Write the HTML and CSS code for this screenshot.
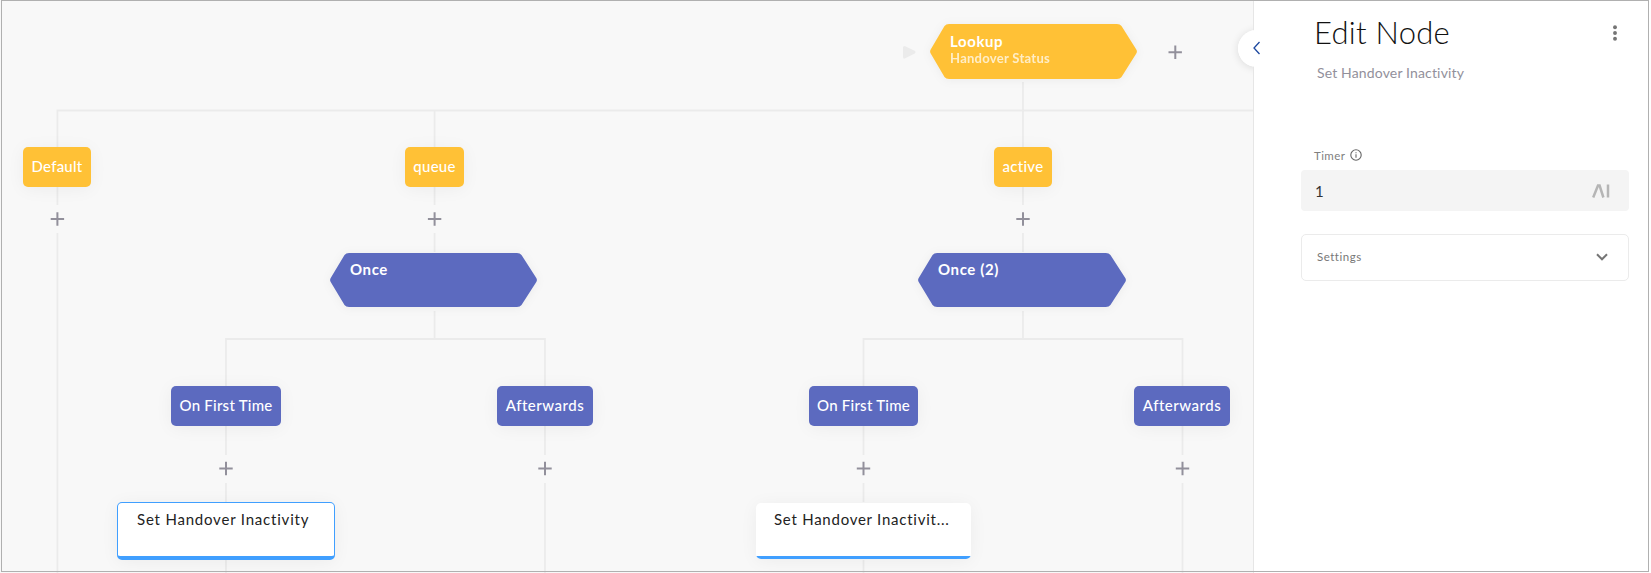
FILE: index.html
```html
<!DOCTYPE html>
<html lang="en">
<head>
<meta charset="utf-8">
<title>Edit Node</title>
<link rel="stylesheet" href="styles.css">
</head>
<body>
<div class="app">
  <main class="canvas">
    <svg class="edges" width="1254" height="573" viewBox="0 0 1254 573">
      <path d="M57.4 147V110.5H1254M434.6 110.5V205M1023 82V205M57.4 147V205M57.4 233V573M434.6 233V252M1023 233V252"/>
      <path d="M434.6 311V339M226 455V339H545V455M226 483V502M545 483V573M226 560V573"/>
      <path d="M1023 311V339M863.5 455V339H1182.5V455M863.5 483V502M1182.5 483V573M863.5 560V573"/>
      <path class="play" d="M904.5 47.5L914 52.2L904.5 57Z"/>
      <g class="plus">
        <path d="M1168.5 52.3h13.4M1175.3 45.6v13.4"/>
        <path d="M50.7 219h13.4M57.4 212.3v13.4"/>
        <path d="M427.9 219h13.4M434.6 212.3v13.4"/>
        <path d="M1016.3 219h13.4M1023 212.3v13.4"/>
        <path d="M219.3 468.5h13.4M226 461.8v13.4"/>
        <path d="M538.3 468.5h13.4M545 461.8v13.4"/>
        <path d="M856.8 468.5h13.4M863.5 461.8v13.4"/>
        <path d="M1175.8 468.5h13.4M1182.5 461.8v13.4"/>
      </g>
    </svg>

    <div class="hex lookup">
      <svg class="shape" width="207" height="55" viewBox="0 0 207 55"><path d="M19 0H187Q190 0 191.500 2L206.300 25.500Q207.500 27.500 206.300 29.500L191.500 53Q190 55 187 55H19Q16 55 14.500 53L.7 29.500Q-.5 27.500 .7 25.500L14.500 2Q16 0 19 0Z"/></svg>
      <div class="label"><b>Lookup</b><span>Handover Status</span></div>
    </div>
    <div class="hex once-a">
      <svg class="shape" width="207" height="54" viewBox="0 0 207 55" preserveAspectRatio="none"><path d="M19 0H187Q190 0 191.500 2L206.300 25.500Q207.500 27.500 206.300 29.500L191.500 53Q190 55 187 55H19Q16 55 14.500 53L.7 29.500Q-.5 27.500 .7 25.500L14.500 2Q16 0 19 0Z"/></svg>
      <div class="label"><b>Once</b></div>
    </div>
    <div class="hex once-b">
      <svg class="shape" width="208" height="54" viewBox="0 0 207 55" preserveAspectRatio="none"><path d="M19 0H187Q190 0 191.500 2L206.300 25.500Q207.500 27.500 206.300 29.500L191.500 53Q190 55 187 55H19Q16 55 14.500 53L.7 29.500Q-.5 27.500 .7 25.500L14.500 2Q16 0 19 0Z"/></svg>
      <div class="label"><b>Once (2)</b></div>
    </div>

    <div class="tag yellow default"><span>Default</span></div>
    <div class="tag yellow queue"><span>queue</span></div>
    <div class="tag yellow active"><span>active</span></div>
    <div class="tag blue first-a"><span>On First Time</span></div>
    <div class="tag blue after-a"><span>Afterwards</span></div>
    <div class="tag blue first-b"><span>On First Time</span></div>
    <div class="tag blue after-b"><span>Afterwards</span></div>

    <div class="card selected"><span>Set Handover Inactivity</span></div>
    <div class="card plain"><span>Set Handover Inactivit...</span></div>
    <div class="toggle"></div>
  </main>

  <aside class="panel">
    <svg class="back" width="8" height="14" viewBox="0 0 8 14"><path d="M6.500 1L1 7l5.500 6"/></svg>
    <header class="head">
      <h1><span>Edit Node</span></h1>
      <svg class="dots" width="4" height="16" viewBox="0 0 4 16"><circle cx="2" cy="2.200" r="1.950"/><circle cx="2" cy="8" r="1.950"/><circle cx="2" cy="13.700" r="1.950"/></svg>
    </header>
    <p class="sub"><span>Set Handover Inactivity</span></p>
    <div class="field-label">
      <span>Timer</span>
      <svg width="12" height="12" viewBox="0 0 12 12"><circle cx="6" cy="6" r="5.200"/><path d="M6 5.300v3.500M6 3.200v1.100"/></svg>
    </div>
    <div class="input">
      <span>1</span>
      <svg width="18" height="14" viewBox="0 0 18 14"><path d="M1.200 13.500L6 1.500h1.600L11.400 13.500M16 .5v13"/></svg>
    </div>
    <div class="settings">
      <span>Settings</span>
      <svg width="12" height="8" viewBox="0 0 12 8"><path d="M1 1.300l5 5 5-5"/></svg>
    </div>
  </aside>
</div>
</body>
</html>
```
FILE: styles.css
```css
*, *::before, *::after { box-sizing: border-box; }
body {
  margin: 0;
  background: #fff;
  font-family: Lato, "Open Sans", sans-serif;
  font-variant-ligatures: none;
  overflow: hidden;
}
.app {
  position: relative;
  display: flex;
  width: 1651px;
  height: 573px;
}
.app::after {
  content: "";
  position: absolute;
  left: 1px;
  top: 0;
  width: 1648px;
  height: 572px;
  border: 1px solid #b0b0b0;
  pointer-events: none;
}
.canvas {
  position: relative;
  width: 1254px;
  height: 573px;
  background: #f8f8f8;
}
.edges { position: absolute; left: 0; top: 0; fill: none; stroke: #ebebeb; stroke-width: 1.8; }
.play { fill: #ebebeb; stroke: #ebebeb; stroke-width: 3; stroke-linejoin: round; }
.plus { stroke: #92909b; stroke-width: 2; }

.hex { position: absolute; height: 55px; color: #fff; }
.shape { position: absolute; left: 0; top: 0; filter: drop-shadow(0 1px 5px rgba(0, 0, 0, .05)); }
.label { position: relative; display: flex; flex-direction: column; align-items: flex-start; padding: 8px 0 0 20px; }
.label b { font-size: 15px; line-height: 18px; font-weight: 700; letter-spacing: .6px; white-space: nowrap; }
.label span { font-size: 13px; line-height: 16px; font-weight: 700; letter-spacing: .28px; opacity: .72; white-space: nowrap; }
.lookup { left: 930px; top: 24px; width: 207px; fill: #ffc136; }
.once-a { left: 330px; top: 253px; width: 207px; fill: #5c6abf; }
.once-b { left: 918px; top: 253px; width: 208px; fill: #5c6abf; }
.once-a .label, .once-b .label { padding-top: 7px; }

.tag {
  position: absolute;
  height: 40px;
  border-radius: 5px;
  display: flex;
  justify-content: center;
  color: #fff;
  font-size: 15px;
  font-weight: 500;
  line-height: 38px;
  letter-spacing: .25px;
  white-space: nowrap;
  box-shadow: 0 2px 18px rgba(0, 0, 0, .05);
}
.yellow { background: #ffc136; top: 147px; }
.blue { background: #5c6abf; top: 386px; }
.default { left: 23px; width: 68px; }
.queue { left: 405px; width: 59px; }
.active { left: 994px; width: 58px; }
.first-a { left: 171px; width: 110px; }
.after-a { left: 497px; width: 96px; letter-spacing: .5px; }
.first-b { left: 809px; width: 109px; }
.after-b { left: 1134px; width: 96px; letter-spacing: .5px; }

.card {
  position: absolute;
  background: #fff;
  color: #222;
  border-radius: 5px;
  font-size: 15px;
  line-height: 20px;
  letter-spacing: .8px;
  white-space: nowrap;
  box-shadow: 0 2px 18px rgba(0, 0, 0, .05);
}
.selected { left: 117px; top: 502px; width: 218px; height: 58px; border: 1px solid #409fff; border-bottom-width: 4px; padding: 6px 0 0 19px; }
.plain { left: 756px; top: 503px; width: 215px; height: 56px; padding: 6px 0 0 18px; overflow: hidden; letter-spacing: .75px; }
.plain::after { content: ""; position: absolute; left: 0; bottom: 0; width: 100%; height: 3px; background: #409fff; }
.toggle { position: absolute; left: 1238px; top: 30px; width: 37px; height: 37px; border-radius: 50%; background: #fff; box-shadow: 0 1px 8px rgba(0, 0, 0, .12); }

.panel {
  position: relative;
  width: 395px;
  height: 573px;
  padding: 12px 20px 0 47px;
  background: #fff;
  box-shadow: -1px 0 0 #e6e6e6;
}
.panel::before { content: ""; position: absolute; left: -16px; top: 30px; width: 37px; height: 37px; border-radius: 50%; background: #fff; }
.back { position: absolute; left: -1px; top: 41px; fill: none; stroke: #1c479f; stroke-width: 1.3; }
.head { display: flex; justify-content: space-between; padding: 0 12px 0 13px; }
h1 { margin: 0; font-size: 31px; line-height: 40px; font-weight: 300; letter-spacing: .25px; color: #111; white-space: nowrap; }
.dots { margin-top: 13px; fill: #757575; }
.sub { margin: 11px 0 0 16px; font-size: 14px; line-height: 20px; letter-spacing: .15px; color: #92909b; font-weight: 400; }
.field-label { display: flex; align-items: center; gap: 5px; height: 16px; margin: 64px 0 7px 13px; font-size: 11.5px; letter-spacing: .4px; color: #808080; }
.field-label svg { fill: none; stroke: #666; stroke-width: 1.1; }
.input { display: flex; align-items: center; justify-content: space-between; height: 41px; padding: 0 19px 0 14px; border-radius: 4px; background: #f4f4f4; font-size: 15px; color: #333; }
.input svg { fill: none; stroke: #b5b5b5; stroke-width: 2.5; }
.settings { display: flex; align-items: center; justify-content: space-between; height: 47px; margin-top: 23px; padding: 0 20px 1px 15px; border: 1px solid #ebebeb; border-radius: 5px; font-size: 11.5px; line-height: 16px; letter-spacing: .5px; color: #777; }
.settings svg { fill: none; stroke: #757575; stroke-width: 2; }
```
